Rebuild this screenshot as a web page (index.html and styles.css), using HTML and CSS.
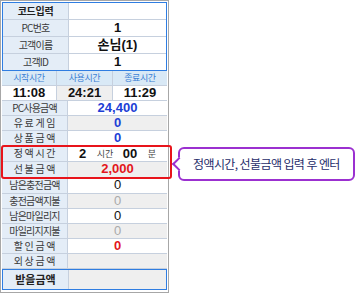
FILE: index.html
```html
<!DOCTYPE html>
<html>
<head>
<meta charset="utf-8">
<title>계산</title>
<link rel="stylesheet" href="styles.css">
</head>
<body>
<div class="panel">
	<div class="box">
		<div class="row"><div class="lbl strong">코드입력</div><div class="val"></div></div>
		<div class="row"><div class="lbl">PC번호</div><div class="val bold">1</div></div>
		<div class="row"><div class="lbl">고객이름</div><div class="val bold">손님(1)</div></div>
		<div class="row"><div class="lbl">고객ID</div><div class="val bold">1</div></div>
	</div>
	<div class="times">
		<div class="th">시작시간</div>
		<div class="th">사용시간</div>
		<div class="th">종료시간</div>
		<div class="td">11:08</div>
		<div class="td gray">24:21</div>
		<div class="td">11:29</div>
	</div>
	<div class="list">
		<div class="row"><div class="lbl">PC사용금액</div><div class="val bold blue">24,400</div></div>
		<div class="row"><div class="lbl sp">유 료 게 임</div><div class="val gray bold blue">0</div></div>
		<div class="row"><div class="lbl sp">상 품 금 액</div><div class="val bold blue">0</div></div>
		<div class="row tall"><div class="lbl sp">정 액 시 간</div>
			<div class="val fixed"><span class="num">2</span><span class="unit">시간</span><span class="num">00</span><span class="unit">분</span></div>
		</div>
		<div class="row tall"><div class="lbl sp">선 불 금 액</div><div class="val gray red">2,000</div></div>
		<div class="row tall"><div class="lbl">남은충전금액</div><div class="val">0</div></div>
		<div class="row"><div class="lbl">충전금액지불</div><div class="val gray dim">0</div></div>
		<div class="row"><div class="lbl">남은마일리지</div><div class="val">0</div></div>
		<div class="row"><div class="lbl">마일리지지불</div><div class="val gray dim">0</div></div>
		<div class="row"><div class="lbl sp">할 인 금 액</div><div class="val red">0</div></div>
		<div class="row"><div class="lbl sp">외 상 금 액</div><div class="val gray"></div></div>
	</div>
	<div class="box total">
		<div class="row"><div class="lbl big">받을금액</div><div class="val gray"></div></div>
	</div>
</div>

<div class="mark"></div>
<div class="tip">정액시간, 선불금액 입력 후 엔터</div>
</body>
</html>
```

FILE: styles.css
```css
* {margin:0; padding:0; box-sizing:border-box;}
body {background:#fff; font-family:"Noto Sans CJK KR", "Liberation Sans", sans-serif; color:#333;}

.panel {width:169px; height:293px; border:1px solid #a7a7a7; padding:1px; background:#fff;}

.box {border:1px solid #2f7de1;}
.row {display:grid; grid-template-columns:66px 1fr; height:15px; border-bottom:1px solid #c6d0de;}
.row.tall {height:16px;}
.box .row {height:17px;}
.box .row:last-child {border-bottom:0; height:16px;}

.lbl {background:#e4edf7; border-right:1px solid #c6d0de; text-align:center; font-size:10px; letter-spacing:-0.8px; line-height:14px; white-space:nowrap; color:#3a3a3a;}
.lbl.sp {letter-spacing:-0.3px;}
.box .lbl {line-height:16px;}
.lbl.strong {font-weight:bold; color:#222; letter-spacing:-0.3px;}

.val {text-align:center; font-family:"Liberation Sans", "Noto Sans CJK KR", sans-serif; font-size:13px; line-height:14px; color:#111; white-space:nowrap;}
.box .val {line-height:16px;}
.val.bold {font-weight:bold;}
.gray {background:#efefef;}
.blue {color:#1c3fd6;}
.red {color:#e3161c; font-weight:bold;}
.dim {color:#aaa;}

.fixed {display:grid; grid-template-columns:29px 16px 34px 10px 1fr; justify-items:center; align-items:center;}
.fixed .num {font-weight:bold; font-size:13px;}
.fixed .unit {font-family:"Noto Sans CJK KR", sans-serif; font-size:9px; color:#444;}

.times {display:grid; grid-template-columns:55px 56px 1fr;}
.th, .td {height:15px; border-bottom:1px solid #c6d0de; border-right:1px solid #c6d0de; text-align:center; white-space:nowrap;}
.th:nth-child(3), .td:nth-child(6) {border-right:0;}
.th {background:#d9e9f6; color:#3b7fd4; font-size:9px; letter-spacing:-0.4px; line-height:14px;}
.td {font-family:"Liberation Sans", sans-serif; font-weight:bold; font-size:13px; line-height:14px; color:#111;}

.total .row, .total .row:last-child {height:19px;}
.total .lbl {line-height:19px;}
.lbl.big {font-size:11px; font-weight:bold; color:#222; letter-spacing:0;}

.mark {position:absolute; left:1px; top:145px; width:171px; height:34px; border:2px solid #e8141b; border-radius:3px;}

.tip {position:absolute; left:178px; top:147px; width:177px; height:34px; border:2px solid #9b30d0; border-radius:6px; background:#fff; padding-left:13px; font-size:12px; letter-spacing:-0.6px; line-height:30px; color:#1f2d6a; white-space:nowrap;}
.tip:before {content:""; position:absolute; left:-6px; top:10px; width:8px; height:8px; background:#fff; border-left:2px solid #9b30d0; border-bottom:2px solid #9b30d0; transform:rotate(45deg);}
```
